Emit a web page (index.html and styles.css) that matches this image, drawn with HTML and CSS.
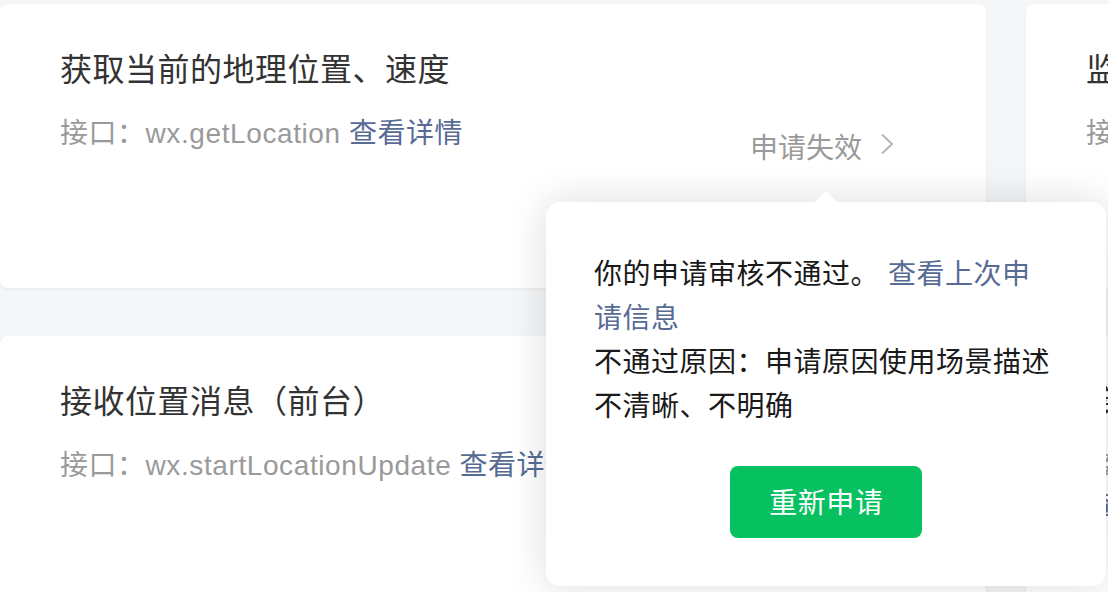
FILE: index.html
```html
<!DOCTYPE html>
<html lang="zh-CN">
<head>
<meta charset="utf-8">
<title>地理位置接口</title>
<link rel="stylesheet" href="styles.css">
</head>
<body>
<main class="grid">
  <section class="card">
    <div class="card-main">
      <h3 class="card-title">获取当前的地理位置、速度</h3>
      <p class="card-api">接口：<span class="api-name">wx.getLocation</span> <a class="link">查看详情</a></p>
    </div>
    <div class="status">
      <span class="status-text">申请失效</span>
      <svg class="chevron" width="14" height="22" viewBox="0 0 14 22" aria-hidden="true"><polyline points="2,1.5 12,11 2,20.5" fill="none" stroke="#b2b2b2" stroke-width="1.8"/></svg>
    </div>
    <div class="popover">
      <span class="arrow"></span>
      <p class="pop-text">你的申请审核不通过。<a class="link pop-link">查看上次申请信息</a></p>
      <p class="pop-text">不通过原因：申请原因使用场景描述不清晰、不明确</p>
      <div class="pop-actions"><button class="btn">重新申请</button></div>
    </div>
  </section>
  <section class="card">
    <div class="card-main">
      <h3 class="card-title">监听实时地理位置变化事件</h3>
      <p class="card-api">接口：<span class="api-name">wx.onLocationChange</span> <a class="link">查看详情</a></p>
    </div>
  </section>
  <section class="card">
    <div class="card-main">
      <h3 class="card-title">接收位置消息（前台）</h3>
      <p class="card-api">接口：<span class="api-name">wx.startLocationUpdate</span> <a class="link">查看详情</a></p>
    </div>
  </section>
  <section class="card">
    <div class="card-main">
      <h3 class="card-title">接收位置消息（后台）</h3>
      <p class="card-api">接口：<span class="api-name">wx.startLocationUpdateBackground</span> <a class="link">查看详情</a></p>
    </div>
  </section>
</main>
</body>
</html>
```

FILE: styles.css
```css
html, body {
  margin: 0;
  padding: 0;
  background: #f5f6f7;
  overflow: hidden;
}

body {
  font-family: "Liberation Sans", "Noto Sans CJK SC", sans-serif;
  width: 1108px;
  height: 592px;
}

.grid {
  display: grid;
  grid-template-columns: 986px 680px;
  grid-auto-rows: 284px;
  column-gap: 40px;
  row-gap: 48px;
  padding-top: 4px;
}

.card {
  position: relative;
  display: flex;
  justify-content: space-between;
  align-items: center;
  padding: 0 60px;
  background: #ffffff;
  border-radius: 8px;
  box-shadow: 0 1px 3px rgba(0, 0, 0, 0.06);
}

.card-main {
  align-self: flex-start;
  padding-top: 44px;
}

.card-title {
  margin: 0;
  font-size: 32px;
  line-height: 44px;
  font-weight: 400;
  letter-spacing: 0.5px;
  color: #333333;
}

.card-api {
  margin: 22px 0 0;
  font-size: 28px;
  line-height: 40px;
  letter-spacing: 0.5px;
  color: #9a9a9a;
}

.api-name {
  letter-spacing: 0.6px;
}

.link {
  color: #576b95;
  text-decoration: none;
  cursor: pointer;
}

.status {
  display: flex;
  align-items: center;
  margin-right: 32px;
  margin-top: 5px;
  color: #9a9a9a;
  font-size: 28px;
  line-height: 40px;
}

.chevron {
  display: block;
  margin-left: 18px;
  margin-bottom: 10px;
}

.popover {
  position: absolute;
  left: 546px;
  top: 198px;
  z-index: 10;
  width: 560px;
  box-sizing: border-box;
  padding: 51px 52px 48px 48px;
  background: #ffffff;
  border-radius: 14px;
  box-shadow: 0 0 40px rgba(0, 0, 0, 0.14);
}

.arrow {
  position: absolute;
  left: 272px;
  top: -8px;
  width: 16px;
  height: 16px;
  background: #ffffff;
  transform: rotate(45deg);
}

.pop-text {
  position: relative;
  margin: 0;
  font-size: 28px;
  line-height: 44px;
  letter-spacing: 0.5px;
  color: #1a1a1a;
}

.pop-link {
  margin-left: 9px;
}

.pop-actions {
  display: flex;
  justify-content: center;
  margin-top: 37px;
  margin-right: -4px;
}

.btn {
  width: 192px;
  height: 72px;
  box-sizing: border-box;
  border: none;
  border-radius: 8px;
  background: #07c160;
  color: #ffffff;
  font-family: "Liberation Sans", "Noto Sans CJK SC", sans-serif;
  font-size: 28px;
  font-weight: 400;
  letter-spacing: 0.5px;
  line-height: 69px;
  padding: 3px 0 0 0.5px;
}
```
